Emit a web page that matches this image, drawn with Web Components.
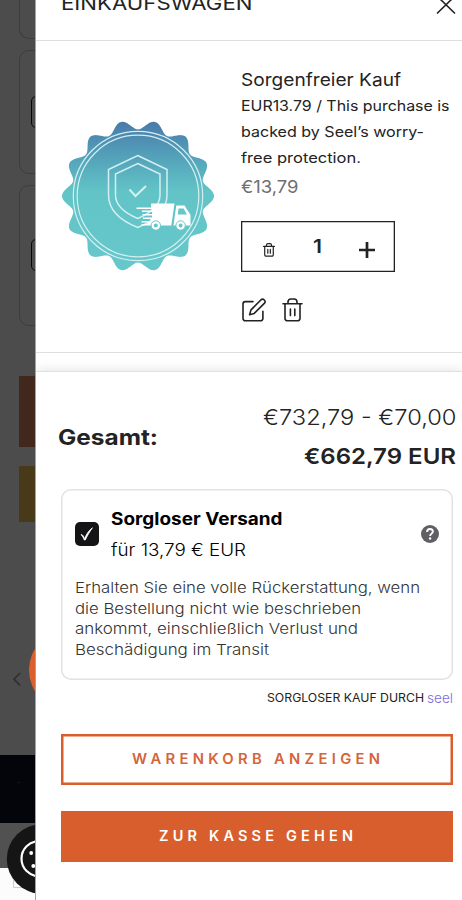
<!DOCTYPE html>
<html lang="de">
<head>
<meta charset="utf-8">
<title>Einkaufswagen</title>
<style>
html,body{margin:0;height:900px;overflow:hidden}
body{font-family:Inter,"Liberation Sans",sans-serif;color:#232323;background:#fff}
</style>
</head>
<body>
<cart-page></cart-page>
<script>
// A single line of text set to an exact width: w = width, s = size, b = weight, h = line height, ls = tracking
class FitLine extends HTMLElement{
  connectedCallback(){
    const a=(n,d)=>this.getAttribute(n)||d;
    const w=+a('w'),ls=+a('ls','0');
    const r=this.attachShadow({mode:'open'});
    r.innerHTML=`<style>
      :host{display:block;flex:none;width:${w}px;height:${a('h','20')}px;line-height:${a('h','20')}px;font-size:${a('s','16')}px;font-weight:${a('b','400')};letter-spacing:${ls}px;white-space:nowrap}
      span{display:inline-block;transform-origin:0 50%}
    </style><span><slot></slot></span>`;
    const span=r.querySelector('span');
    const nat=span.getBoundingClientRect().width-ls;
    span.style.transform=`scaleX(${(w/nat).toFixed(4)})`;
  }
}
function define(name,html){
  const t=document.createElement('template');t.innerHTML=html;
  customElements.define(name,class extends HTMLElement{
    constructor(){super();this.attachShadow({mode:'open'}).append(t.content.cloneNode(true));}
  });
}
customElements.define('fit-line',FitLine);

define('trash-icon',`<style>:host{display:block;width:21px;height:24px}svg{display:block;width:100%;height:100%;stroke-width:var(--stroke,1.6)}</style>
<svg viewBox="0 0 21 24" fill="none" stroke="#222" stroke-linecap="round" stroke-linejoin="round"><path d="M1 5.7h19M6 5.5V4a3 3 0 0 1 3-3h3a3 3 0 0 1 3 3v1.500M3 5.700V20.500a2.300 2.300 0 0 0 2.300 2.300h10.400a2.300 2.300 0 0 0 2.300-2.300V5.700M8.400 11v6.600M12.800 11v6.600"/></svg>`);

define('edit-icon',`<style>:host{display:block;width:24px;height:24px}svg{display:block}</style>
<svg width="24" height="24" viewBox="0 0 24 24" fill="none" stroke="#222" stroke-width="1.6" stroke-linecap="round" stroke-linejoin="round"><path d="M11 3.600H3.300A2.300 2.300 0 0 0 1 5.900v14.600a2.300 2.300 0 0 0 2.300 2.300h15.300a2.300 2.300 0 0 0 2.300-2.300v-7.300"/><path d="M18.800 2a2.400 2.400 0 0 1 3.500 3.400L12.200 15.400l-4.600 1.400 1.400-4.900z"/></svg>`);

customElements.define('protection-seal',class extends HTMLElement{
  constructor(){
    super();
    let d='';
    for(let i=0;i<560;i++){
      const t=i*Math.PI/280,r=71.300+4.700*Math.cos(14*t);
      d+=(i?'L':'M')+(77+r*Math.cos(t)).toFixed(2)+' '+(77+r*Math.sin(t)).toFixed(2);
    }
    this.attachShadow({mode:'open'}).innerHTML=`<style>:host{display:block;width:154px;height:154px}svg{display:block}</style>
    <svg width="154" height="154" viewBox="0 0 154 154" fill="none">
      <defs><linearGradient id="g" x1="0" y1="0" x2="0" y2="1"><stop offset="0" stop-color="#497aaa"/><stop offset=".22" stop-color="#539fb9"/><stop offset=".47" stop-color="#62c4c7"/><stop offset="1" stop-color="#66c8ca"/></linearGradient></defs>
      <path d="${d}Z" fill="url(#g)"/>
      <g stroke="#d3eff1"><circle cx="77" cy="77" r="64.700" stroke-width="1.200"/><circle cx="77" cy="77" r="60.800" stroke-width="1.200"/>
      <path stroke-width="1.500" d="M76.700 36.500 106 50.500V76c0 14-11 25-29.300 32.500C58 101 47.500 90 47.500 76V50.500z"/>
      <path stroke-width="1.500" d="M76.700 44.500 99 55v21c0 10-8 17.500-22.300 23.500C62.500 93.500 54.500 86 54.500 76V55z"/>
      <path stroke-width="2" d="m68.500 70.500 6 6.500 10.500-10"/></g>
      <path fill="#fff" d="M90 84.500h23.500l-3.200 22H80.500v-1.400h6v-1.700h-6v-1.300h9v-2.200H82v-1.300h9v-2.200h-9.500v-1.300H91v-2.200H81v-1.500h9.500v-1.300H75.500v-1.500H90z"/>
      <path fill="#fff" d="M115.300 86.500h8.200l6 9.500v10.500h-17z"/><path fill="#65c7c9" d="M117.600 89.500h5l3.400 6h-9.300z"/>
      <g fill="#fff" stroke="#65c7c9" stroke-width="1"><circle cx="94.800" cy="106.500" r="4.700"/><circle cx="119.600" cy="106.500" r="4.700"/></g>
      <g fill="#65c7c9"><circle cx="94.800" cy="106.500" r="2"/><circle cx="119.600" cy="106.500" r="2"/></g>
    </svg>`;
  }
});

// Dimmed shop page visible beside the drawer
define('dimmed-page',`<style>
:host{display:flex;flex-direction:column;width:35px;height:900px;overflow:hidden;position:relative;background:#4c4c4c;border-right:1px solid #a3a3a3;box-sizing:content-box}
.card{box-sizing:border-box;flex:none;width:60px;margin-left:19px;border:1px solid #3d3d3d;border-radius:10px;padding-left:11px}
.card i{display:block;box-sizing:border-box;width:40px;height:32px;border:1px solid #080808;border-radius:5px}
.bar{flex:none;margin-left:19px}
.night{flex:none;height:68px;margin-top:233px;background:#03050b}
.foot{flex:none;height:45px;background:#515151}
.end{flex:1;background:#fcfcfc}
svg{position:absolute;left:0;top:0}
</style>
<div class="card" style="height:39px;border-top:0;border-top-left-radius:0"></div>
<div class="card" style="height:124px;margin-top:11px;padding-top:45px"><i></i></div>
<div class="card" style="height:141px;margin-top:11px;padding-top:53px"><i></i></div>
<div class="bar" style="height:71px;margin-top:50px;background:#42281c"></div>
<div class="bar" style="height:56px;margin-top:19px;background:#483a19"></div>
<div class="night"></div><div class="foot"></div><div class="end"></div>
<svg width="35" height="900" fill="none"><circle cx="69.500" cy="670" r="40.500" fill="#db602d"/><path d="m20 673-6 6.200 6 6.200" stroke="#2f2f2f" stroke-width="1.600"/>
<path d="M13.500 880v7.500H22" stroke="#ccc"/><circle cx="18.800" cy="782.500" r="1" fill="#15181e"/>
<circle cx="41.500" cy="859" r="34.700" fill="#151515"/><circle cx="39" cy="858.700" r="17.500" stroke="#fff" stroke-width="2.200"/><g fill="#fff"><circle cx="31.200" cy="853" r="1.900"/><circle cx="33.300" cy="866" r="1.900"/></g></svg>`);

define('cart-header',`<style>:host{display:flex;justify-content:space-between;box-sizing:border-box;height:41px;padding-left:25px;border-bottom:1px solid #dfdfdf;overflow:hidden}
fit-line{margin-top:-7px}svg{display:block;width:20px;height:20px;margin:-5px 6px 0 0}</style>
<fit-line w="191.500" s="18.600" b="430">EINKAUFSWAGEN</fit-line><svg viewBox="0 0 20 20" stroke="#222" stroke-width="1.600"><path d="m1 1 18 17.500M19 1 1 18.500"/></svg>`);

define('quantity-box',`<style>:host{display:flex;box-sizing:border-box;width:154px;height:51px;box-shadow:inset 0 0 0 1.300px #222;padding:1px 20px 0 22px;justify-content:space-between}
trash-icon{width:12px;height:14px;margin-top:20.500px;--stroke:2.1}fit-line{margin:15px 0 0 1px}svg{margin-top:19.500px}</style>
<trash-icon></trash-icon><fit-line w="9" s="19" b="600">1</fit-line><svg width="16" height="16" stroke="#222" stroke-width="2.700"><path d="M0 8h16M8 0v16"/></svg>`);

define('cart-item',`<style>:host{display:flex;box-sizing:border-box;height:312px;padding-left:25px;border-bottom:1px solid #dfdfdf}
protection-seal{margin-top:78px}.info{margin:29px 0 0 26px}.l{margin-bottom:6px}
fit-line{margin-left:-.5px}
quantity-box{margin-top:24px;margin-left:-.5px}.tools{display:flex;gap:16px;margin:26px 0 0 .7px}</style>
<protection-seal></protection-seal>
<div class="info">
<fit-line w="160" s="17.600" b="400" style="margin-bottom:6px">Sorgenfreier Kauf</fit-line>
<fit-line class="l" w="208.500" s="14.300" b="440">EUR13.79 / This purchase is</fit-line>
<fit-line class="l" w="183" s="14.300" b="440">backed by Seel’s worry-</fit-line>
<fit-line w="120" s="14.300" b="440" style="margin-bottom:9px">free protection.</fit-line>
<fit-line w="57.500" s="17.600" style="color:#707070">€13,79</fit-line>
<quantity-box></quantity-box>
<div class="tools"><edit-icon></edit-icon><trash-icon></trash-icon></div>
</div>`);

define('cart-total',`<style>:host{display:flex;justify-content:space-between;padding:30px 6px 0 22px}
.r{display:flex;flex-direction:column;align-items:flex-end}</style>
<fit-line w="100" s="21.500" b="700" h="30" style="margin-top:20px">Gesamt:</fit-line>
<div class="r"><fit-line w="193.500" s="22" b="300" h="30">€732,79 - €70,00</fit-line><fit-line w="152" s="22" b="620" h="30" style="margin-top:9px">€662,79 EUR</fit-line></div>`);

define('shipping-option',`<style>:host{display:block;box-sizing:border-box;width:392px;height:191px;box-shadow:inset 0 0 0 1.500px #e2e2e2;border-radius:10px;padding:20px 14px 0}
.top{display:flex;height:51px}.box{display:block;margin-top:13px}.t{margin-left:12px;flex:1;color:#000}.help{margin-top:16px}
.p{color:#333;margin-top:18px}</style>
<div class="top"><svg class="box" width="24" height="24"><rect width="24" height="24" rx="5" fill="#141416"/><path d="M6.300 12.400c1.500.6 2.500 2 3.300 4.400 1.600-4.300 4-8.100 7.800-11-3 4.200-5.300 8.300-7.100 12.200H9.200c-.8-2.400-1.500-3.800-3-5z" fill="#fff" stroke="#fff" stroke-width=".8"/></svg>
<div class="t"><fit-line w="171.500" s="17.200" b="680" style="margin-bottom:11px">Sorgloser Versand</fit-line><fit-line w="135" s="17" b="350">für 13,79 € EUR</fit-line></div>
<svg class="help" width="18" height="18"><circle cx="9" cy="9" r="9" fill="#606064"/><path d="M6.100 6.900C6.100 5 7.400 4 9 4s2.900 1 2.900 2.600C11.900 8.600 9.100 8.700 9.100 11" fill="none" stroke="#fff" stroke-width="1.900"/><circle cx="9.100" cy="13.500" r="1.200" fill="#fff"/></svg></div>
<div class="p"><fit-line w="345" s="14.800" b="360" h="20.500">Erhalten Sie eine volle Rückerstattung, wenn</fit-line><fit-line w="286" s="14.800" b="360" h="20.500">die Bestellung nicht wie beschrieben</fit-line><fit-line w="283" s="14.800" b="360" h="20.500">ankommt, einschließlich Verlust und</fit-line><fit-line w="194" s="14.800" b="360" h="20.500">Beschädigung im Transit</fit-line></div>`);

define('cart-button',`<style>:host{display:flex;box-sizing:border-box;width:392px;height:51px;box-shadow:inset 0 0 0 2.500px #d85f2d;align-items:center;justify-content:center;color:#d4653a}
:host([solid]){background:#d85f2d;color:#fff}</style><slot></slot>`);

define('cart-summary',`<style>:host{display:block;flex:1;margin-top:18px;background:#fff;box-shadow:0 0 12px rgba(0,0,0,.13);border-top:1px solid #e0e0e0}
.b{padding-left:25px}.by{display:flex;width:392px;justify-content:flex-end;gap:3px;margin-top:8px}</style>
<cart-total></cart-total>
<div class="b"><shipping-option style="margin-top:18px"></shipping-option>
<div class="by"><fit-line w="157" s="11.300" b="380">SORGLOSER KAUF DURCH</fit-line><fit-line w="26" s="13.300" b="360" style="color:#786bdd;margin-top:-.5px">seel</fit-line></div>
<cart-button style="margin-top:26px"><fit-line w="248" s="13.800" b="570" ls="4" style="margin:-1px 2px 0 0">WARENKORB ANZEIGEN</fit-line></cart-button>
<cart-button solid style="margin-top:26px"><fit-line w="194" s="13.800" b="570" ls="4" style="margin:-1px 2px 0 0">ZUR KASSE GEHEN</fit-line></cart-button></div>`);

define('cart-drawer',`<style>:host{display:flex;flex-direction:column;flex:1;min-width:0;height:900px;overflow:hidden;background:#fff}</style>
<cart-header></cart-header><cart-item></cart-item><cart-summary></cart-summary>`);

define('cart-page',`<style>:host{display:flex;width:462px;height:900px;overflow:hidden}</style><dimmed-page></dimmed-page><cart-drawer></cart-drawer>`);
</script>
</body>
</html>
